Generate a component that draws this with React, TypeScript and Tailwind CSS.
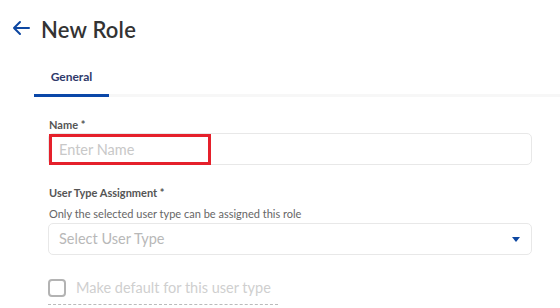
export default function App() {
  return (
    <div className="w-[560px] h-[308px] overflow-hidden bg-white" style={{ fontFamily: 'Lato, "Noto Sans", sans-serif' }}>
      <div className="flex items-center gap-[10px] pl-[11px] pt-[14px] h-[30px] box-content">
        <svg width="20" height="16" viewBox="0 0 20 16" fill="none" className="mt-[-2px]">
          <path d="M18 8H3M9 2L3 8l6 6" stroke="#0d47a1" strokeWidth="2" strokeLinecap="round" strokeLinejoin="round" />
        </svg>
        <h1 className="text-[22px] font-semibold text-[#333] tracking-[0.2px]">New Role</h1>
      </div>

      <div className="ml-[34px] mt-[24px] flex border-b-[3px] border-[#f7f7f7]">
        <div className="w-[75px] -mb-[3px] border-b-[3px] border-[#0a47a8] text-center text-[12px] font-bold text-[#2f3a6b] pb-[8px]">
          General
        </div>
      </div>

      <div className="pl-[48px] pr-[28px] pt-[21px]">
        <label className="block text-[11px] leading-[14px] font-bold text-[#555] pl-px">Name *</label>
        <div className="relative mt-px">
          <input
            placeholder="Enter Name"
            className="w-full h-[32px] rounded-[5px] border border-[#e8e8e8] px-[10px] text-[14.5px] outline-none placeholder:text-[#c8c8c8]"
          />
          <div className="absolute left-px top-px w-[162px] h-[31px] border-[3px] border-[#e5202b] pointer-events-none" />
        </div>

        <label className="block text-[11px] leading-[14px] font-bold text-[#555] mt-[21px] pl-px">User Type Assignment *</label>
        <p className="text-[11px] leading-[14px] text-[#666] mt-[7px] pl-px">Only the selected user type can be assigned this role</p>
        <div className="mt-[2px] h-[32px] rounded-[5px] border border-[#e8e8e8] flex items-center justify-between px-[10px]">
          <span className="text-[14.5px] text-[#b8b8b8]">Select User Type</span>
          <svg width="8" height="5" viewBox="0 0 8 5" className="mr-px">
            <path d="M0 0h8L4 5z" fill="#0d47a1" />
          </svg>
        </div>

        <div className="mt-[24px] h-[18px] flex items-center gap-[10px]">
          <span className="w-[18px] h-[18px] rounded-[4px] border-2 border-[#b3b3b3] shrink-0" />
          <span className="text-[14.5px] leading-[18px] text-[#cfcfcf]">Make default for this user type</span>
        </div>
        <div className="mt-[7px] w-[230px] border-t border-dashed border-[#bbb]" />
      </div>
    </div>
  );
}
